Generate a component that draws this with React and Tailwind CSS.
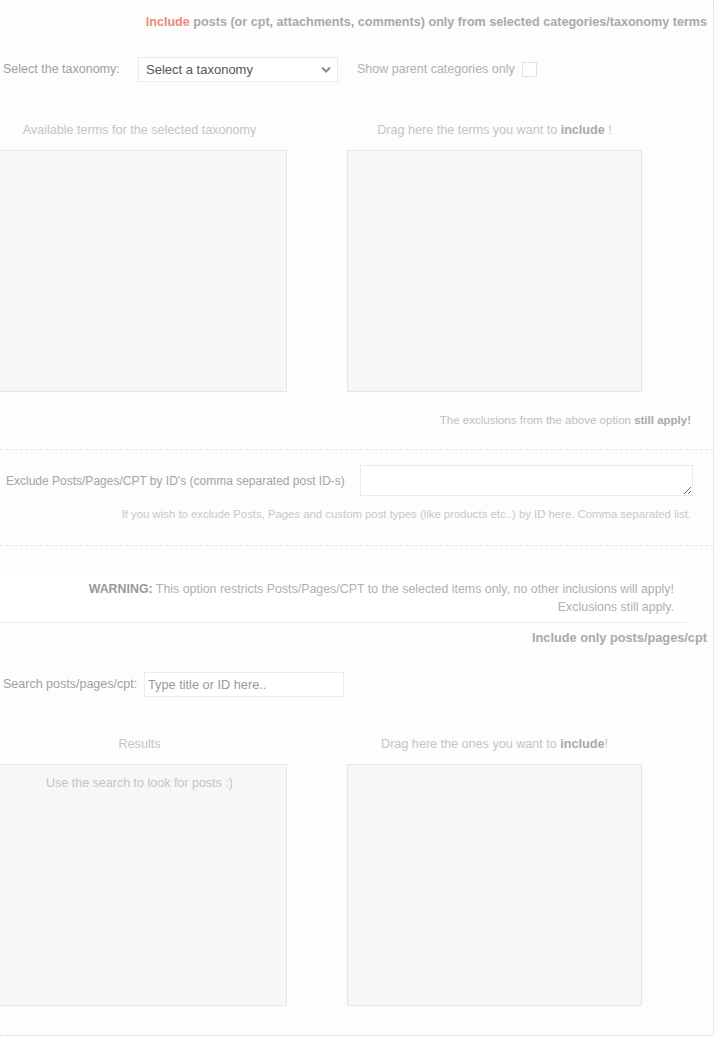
import React from "react";

const font = { fontFamily: '"Liberation Sans", Arial, sans-serif' };

const Chevron = () => (
    <svg width="10" height="7" viewBox="0 0 10 7" className="text-[#888]">
        <path d="M1 1.5 L5 5.5 L9 1.5" fill="none" stroke="currentColor" strokeWidth="2" />
    </svg>
);

const DropBox = ({ children }) => (
    <div className="w-[295px] h-[242px] bg-[#f7f7f7] border border-[#e6e6e6] text-center pt-[10px] text-[12.5px] leading-[16px] text-[#c4c4c4]">
        {children}
    </div>
);

const Columns = ({ left, right, leftBody }) => (
    <div className="flex gap-[60px] -ml-2">
        <div className="w-[295px]">
            <div className="text-center text-[12.6px] text-[#c4c4c4] h-[20px] leading-[20px] mb-[10px]">{left}</div>
            <DropBox>{leftBody}</DropBox>
        </div>
        <div className="w-[295px]">
            <div className="text-center text-[12.6px] text-[#c4c4c4] h-[20px] leading-[20px] mb-[10px]">{right}</div>
            <DropBox />
        </div>
    </div>
);

export default function App() {
    return (
        <div className="bg-white min-h-screen overflow-hidden" style={font}>
            <div className="w-[714px] h-[1036px] bg-[#fdfdfd] border-r border-b border-dotted border-[#d6d6d6]">
                {/* taxonomy include */}
                <div className="pt-[14px] pr-[6px] text-right text-[12.6px] font-bold text-[#a9a9a9] leading-[16px]">
                    <span className="text-[#ef8a73]">Include</span> posts (or cpt, attachments, comments) only from selected categories/taxonomy terms
                </div>

                <div className="flex items-center mt-[27px] pl-[3px] h-[25px]">
                    <span className="text-[12.5px] text-[#a0a0a0] w-[135px]">Select the taxonomy:</span>
                    <div className="w-[200px] h-[25px] bg-white border border-[#ebebeb] flex items-center justify-between pl-[7px] pr-[6px]">
                        <span className="text-[13px] text-[#555]">Select a taxonomy</span>
                        <Chevron />
                    </div>
                    <span className="ml-[19px] text-[12.5px] text-[#b0b0b0]">Show parent categories only</span>
                    <span className="ml-[7px] w-[15px] h-[15px] bg-white border border-[#e2e2e2]" />
                </div>

                <div className="mt-[38px]">
                    <Columns
                        left="Available terms for the selected taxonomy"
                        right={<>Drag here the terms you want to <b className="text-[#a9a9a9]">include</b> !</>}
                    />
                </div>

                <div className="mt-[20px] pr-[22px] text-right text-[11.5px] leading-[16px] text-[#c0c0c0]">
                    The exclusions from the above option <b className="text-[#a9a9a9]">still apply!</b>
                </div>

                <div className="mt-[21px] border-t border-dashed border-[#e6e6e6]" />

                <div className="flex items-center mt-[15px] pl-[6px]">
                    <span className="text-[12px] text-[#a4a4a4] w-[354px]">Exclude Posts/Pages/CPT by ID's (comma separated post ID-s)</span>
                    <textarea className="w-[333px] h-[31px] bg-white border border-[#ebebeb] resize-y" />
                </div>
                <div className="mt-[10px] pr-[22px] text-right text-[11.35px] leading-[16px] text-[#c8c8c8]">
                    If you wish to exclude Posts, Pages and custom post types (like products etc..) by ID here. Comma separated list.
                </div>

                <div className="mt-[23px] border-t border-dashed border-[#e6e6e6]" />

                {/* warning */}
                <div className="mt-[30px] w-[687px] bg-white border-b border-[#eeeeee] pr-[13px] pt-[4px] pb-[6px] text-right text-[12.4px] leading-[18px] text-[#b0b0b0]">
                    <div><b className="text-[#999]">WARNING:</b> This option restricts Posts/Pages/CPT to the selected items only, no other inclusions will apply!</div>
                    <div>Exclusions still apply.</div>
                </div>

                <div className="mt-[7px] pr-[6px] text-right text-[12.75px] leading-[16px] font-bold text-[#a9a9a9]">
                    Include only posts/pages/cpt
                </div>

                <div className="flex items-center mt-[26px] pl-[3px]">
                    <span className="text-[12.5px] text-[#a0a0a0] w-[141px]">Search posts/pages/cpt:</span>
                    <input
                        className="w-[200px] h-[25px] bg-white border border-[#ebebeb] px-[3px] text-[12.75px] outline-none placeholder:text-[#999]"
                        placeholder="Type title or ID here.."
                    />
                </div>

                <div className="mt-[37px]">
                    <Columns
                        left="Results"
                        right={<>Drag here the ones you want to <b className="text-[#a9a9a9]">include</b>!</>}
                        leftBody="Use the search to look for posts :)"
                    />
                </div>
            </div>
        </div>
    );
}
